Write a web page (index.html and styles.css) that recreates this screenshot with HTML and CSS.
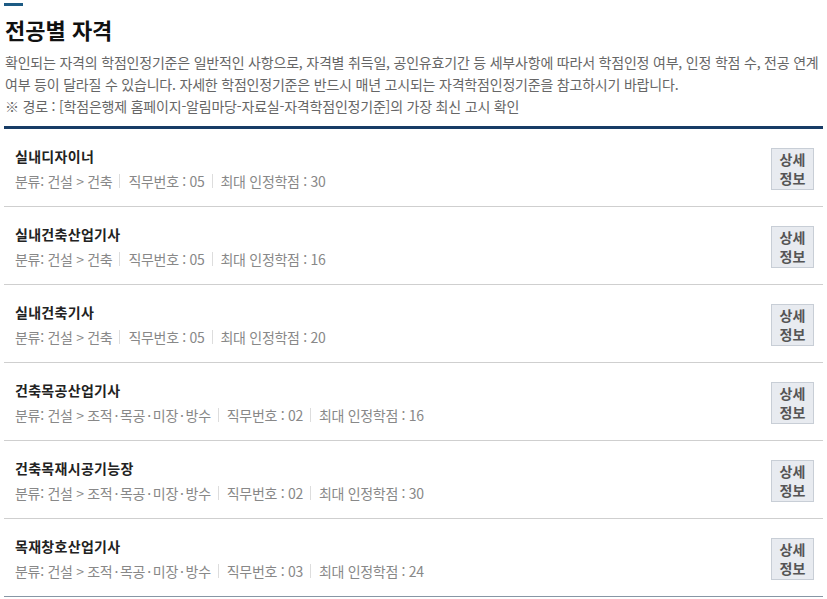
FILE: index.html
```html
<!DOCTYPE html>
<html lang="ko">
<head>
<meta charset="utf-8">
<link rel="stylesheet" href="styles.css">
</head>
<body>
<div class="page">
  <div class="accent"></div>
  <h2 class="title">전공별 자격</h2>
  <p class="desc">확인되는 자격의 학점인정기준은 일반적인 사항으로, 자격별 취득일, 공인유효기간 등 세부사항에 따라서 학점인정 여부, 인정 학점 수, 전공 연계 여부 등이 달라질 수 있습니다. 자세한 학점인정기준은 반드시 매년 고시되는 자격학점인정기준을 참고하시기 바랍니다.<br>※ 경로 : [학점은행제 홈페이지-알림마당-자료실-자격학점인정기준]의 가장 최신 고시 확인</p>
  <ul class="list">
    <li class="item">
      <div class="info">
        <div class="name">실내디자이너</div>
        <div class="meta"><span>분류: 건설 &gt; 건축</span><span>직무번호 : 05</span><span>최대 인정학점 : 30</span></div>
      </div>
      <button class="btn">상세<br>정보</button>
    </li>
    <li class="item">
      <div class="info">
        <div class="name">실내건축산업기사</div>
        <div class="meta"><span>분류: 건설 &gt; 건축</span><span>직무번호 : 05</span><span>최대 인정학점 : 16</span></div>
      </div>
      <button class="btn">상세<br>정보</button>
    </li>
    <li class="item">
      <div class="info">
        <div class="name">실내건축기사</div>
        <div class="meta"><span>분류: 건설 &gt; 건축</span><span>직무번호 : 05</span><span>최대 인정학점 : 20</span></div>
      </div>
      <button class="btn">상세<br>정보</button>
    </li>
    <li class="item">
      <div class="info">
        <div class="name">건축목공산업기사</div>
        <div class="meta"><span>분류: 건설 &gt; 조적<i class="dot">·</i>목공<i class="dot">·</i>미장<i class="dot">·</i>방수</span><span>직무번호 : 02</span><span>최대 인정학점 : 16</span></div>
      </div>
      <button class="btn">상세<br>정보</button>
    </li>
    <li class="item">
      <div class="info">
        <div class="name">건축목재시공기능장</div>
        <div class="meta"><span>분류: 건설 &gt; 조적<i class="dot">·</i>목공<i class="dot">·</i>미장<i class="dot">·</i>방수</span><span>직무번호 : 02</span><span>최대 인정학점 : 30</span></div>
      </div>
      <button class="btn">상세<br>정보</button>
    </li>
    <li class="item last">
      <div class="info">
        <div class="name">목재창호산업기사</div>
        <div class="meta"><span>분류: 건설 &gt; 조적<i class="dot">·</i>목공<i class="dot">·</i>미장<i class="dot">·</i>방수</span><span>직무번호 : 03</span><span>최대 인정학점 : 24</span></div>
      </div>
      <button class="btn">상세<br>정보</button>
    </li>
  </ul>
</div>
</body>
</html>
```
FILE: styles.css
```css
* { box-sizing: border-box; }
html, body { margin: 0; padding: 0; background: #fff; }
body {
  font-family: "Noto Sans CJK KR", "Noto Sans", sans-serif;
  color: #222;
}
.page { padding: 0 4px; }
.accent {
  margin-top: 3px;
  width: 19px;
  height: 3px;
  background: #1d5b84;
}
.title {
  margin: 8px 0 0 1px;
  font-size: 22px;
  line-height: 30px;
  font-weight: 700;
  color: #111;
}
.desc {
  margin: 7px 0 0 1px;
  font-size: 14px;
  line-height: 22px;
  color: #666;
  letter-spacing: -0.2px;
}
.list {
  list-style: none;
  margin: 9px 0 0;
  padding: 0;
  border-top: 3px solid #173c66;
}
.item {
  display: flex;
  align-items: center;
  justify-content: space-between;
  height: 78px;
  padding: 2px 9px 0 11px;
  border-bottom: 1px solid #cfcfcf;
}
.item.last { border-bottom-color: #8796a5; }
.info { display: flex; flex-direction: column; gap: 2px; }
.name {
  font-size: 14px;
  line-height: 23px;
  font-weight: 700;
  color: #222;
  letter-spacing: 0.3px;
}
.meta {
  display: flex;
  font-size: 14px;
  line-height: 23px;
  color: #888;
  letter-spacing: -0.3px;
}
.meta .dot {
  font-style: normal;
  padding: 0 2px;
}
.meta span + span {
  margin-left: 7px;
  padding-left: 8px;
  border-left: 1px solid #ddd;
  line-height: 14px;
  align-self: center;
}
.btn {
  width: 43px;
  height: 42px;
  padding: 0;
  border: 1px solid #c8ced6;
  background: #e8ebf0;
  color: #555;
  font-family: inherit;
  font-size: 14px;
  line-height: 19px;
  font-weight: 700;
}
```
